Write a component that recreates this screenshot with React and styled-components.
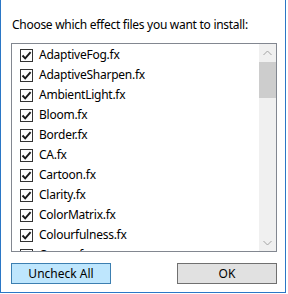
import styled, { createGlobalStyle } from "styled-components";

const effects = [
  "AdaptiveFog.fx",
  "AdaptiveSharpen.fx",
  "AmbientLight.fx",
  "Bloom.fx",
  "Border.fx",
  "CA.fx",
  "Cartoon.fx",
  "Clarity.fx",
  "ColorMatrix.fx",
  "Colourfulness.fx",
  "Curves.fx",
  "DPX.fx",
];

const GlobalStyle = createGlobalStyle`
  html, body {
    margin: 0;
    padding: 0;
    background: #fff;
  }
  body {
    font-family: "Segoe UI", "Noto Sans", sans-serif;
    font-size: 12px;
    color: #000;
  }
`;

const CheckMark = () => (
  <svg width="11" height="11" viewBox="0 0 11 11">
    <path d="M1.5 5.5 L4.2 8.3 L9.6 2.2" fill="none" stroke="#1a1a1a" strokeWidth="1.9" />
  </svg>
);

const Chevron = ({ down }) => (
  <svg width="9" height="6" viewBox="0 0 9 6">
    <path
      d={down ? "M0.5 1 L4.5 5 L8.5 1" : "M0.5 5 L4.5 1 L8.5 5"}
      fill="none"
      stroke="#a3a3a3"
      strokeWidth="1"
    />
  </svg>
);

const App = () => {
  return (
    <>
      <GlobalStyle />
      <Window>
        <Prompt>Choose which effect files you want to install:</Prompt>
        <ListBox>
          <Items>
            {effects.map((name) => (
              <Row key={name}>
                <Box>
                  <CheckMark />
                </Box>
                <span>{name}</span>
              </Row>
            ))}
          </Items>
          <ScrollBar>
            <Arrow>
              <Chevron />
            </Arrow>
            <Track>
              <Thumb />
            </Track>
            <Arrow>
              <Chevron down />
            </Arrow>
          </ScrollBar>
        </ListBox>
        <Buttons>
          <Button $focused>Uncheck All</Button>
          <Button>OK</Button>
        </Buttons>
      </Window>
    </>
  );
};

const Window = styled.div`
  width: 264px;
  height: 292px;
  border: 1px solid #2b77c6;
  border-top: none;
  padding: 0 10px;
  display: flex;
  flex-direction: column;
`;

const Prompt = styled.div`
  margin-top: 17px;
  height: 16px;
  line-height: 16px;
  padding-left: 1px;
  letter-spacing: -0.28px;
  white-space: nowrap;
`;

const ListBox = styled.div`
  margin-top: 10px;
  width: 266px;
  height: 209px;
  box-sizing: border-box;
  border: 1px solid #828790;
  display: flex;
  overflow: hidden;
`;

const Items = styled.div`
  flex: 1;
  padding-top: 1px;
  overflow: hidden;
`;

const Row = styled.div`
  height: 20px;
  line-height: 20px;
  display: flex;
  align-items: center;
  gap: 6px;
  padding-left: 8px;
  white-space: nowrap;
  letter-spacing: -0.25px;
`;

const Box = styled.div`
  width: 13px;
  height: 13px;
  box-sizing: border-box;
  border: 1px solid #333;
  background: #fff;
  display: flex;
  align-items: center;
  justify-content: center;
  flex-shrink: 0;
`;

const ScrollBar = styled.div`
  width: 17px;
  background: #f0f0f0;
  display: flex;
  flex-direction: column;
`;

const Arrow = styled.div`
  height: 17px;
  display: flex;
  align-items: center;
  justify-content: center;
`;

const Track = styled.div`
  flex: 1;
  padding-top: 1px;
`;

const Thumb = styled.div`
  height: 36px;
  background: #cdcdcd;
`;

const Buttons = styled.div`
  margin-top: 11px;
  width: 266px;
  display: flex;
  justify-content: space-between;
`;

const Button = styled.button`
  width: 100px;
  height: 21px;
  padding: 0;
  line-height: 19px;
  font-family: inherit;
  font-size: 12px;
  color: #000;
  background: ${({ $focused }) => ($focused ? "#bee6fd" : "#e1e1e1")};
  border: 1px solid ${({ $focused }) => ($focused ? "#3c7fb1" : "#707070")};
  border-radius: 0;
`;

export default App;
